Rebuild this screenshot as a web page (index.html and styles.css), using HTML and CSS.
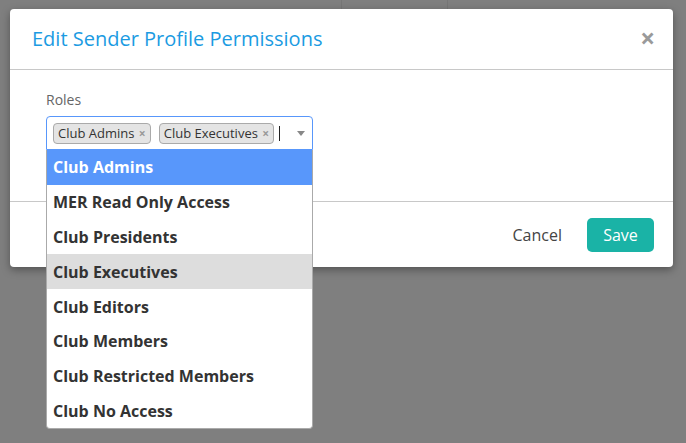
FILE: index.html
```html
<!DOCTYPE html>
<html>
<head>
  <meta charset="UTF-8">
  <title>Edit Sender Profile Permissions</title>
  <link rel="stylesheet" href="styles.css">
</head>
<body>
  <div class="backdrop">
    <div class="modal">
      <div class="modal-header">
        <h4 class="modal-title">Edit Sender Profile Permissions</h4>
        <span class="close">&times;</span>
      </div>
      <div class="modal-body">
        <label class="field-label">Roles</label>
        <div class="select">
          <div class="select-box">
            <span class="tag">Club Admins <span class="tag-x">&times;</span></span>
            <span class="tag">Club Executives <span class="tag-x">&times;</span></span>
            <span class="caret-line"></span>
            <span class="arrow"></span>
          </div>
          <ul class="options">
            <li class="option highlighted">Club Admins</li>
            <li class="option">MER Read Only Access</li>
            <li class="option">Club Presidents</li>
            <li class="option selected">Club Executives</li>
            <li class="option">Club Editors</li>
            <li class="option">Club Members</li>
            <li class="option">Club Restricted Members</li>
            <li class="option">Club No Access</li>
          </ul>
        </div>
      </div>
      <div class="modal-footer">
        <button class="btn-cancel">Cancel</button>
        <button class="btn-save">Save</button>
      </div>
    </div>
  </div>
</body>
</html>
```

FILE: styles.css
```css
* {
  box-sizing: border-box;
}
html, body {
  margin: 0;
  height: 100%;
}
body {
  font-family: "Open Sans", "DejaVu Sans", sans-serif;
  background: #7f7f7f;
  color: #333;
}

.backdrop {
  height: 100%;
  padding: 9px 0 0 10px;
  background:
    linear-gradient(#767676, #767676) 341px 0 / 1px 9px no-repeat,
    linear-gradient(#767676, #767676) 447px 0 / 1px 9px no-repeat,
    #7f7f7f;
}

.modal {
  width: 663px;
  background: #fff;
  border-radius: 4px;
  box-shadow: 0 3px 8px rgba(0, 0, 0, .35);
}

.modal-header {
  height: 61px;
  display: flex;
  align-items: center;
  justify-content: space-between;
  padding: 0 18px 2px 22px;
  border-bottom: 1px solid #c8c8c8;
}
.modal-title {
  margin: 0;
  font-size: 20px;
  font-weight: normal;
  color: #1b9be2;
}
.close {
  font-size: 26px;
  font-weight: bold;
  color: #9a9a9a;
  line-height: 1;
}

.modal-body {
  height: 131px;
  padding: 20px 36px;
}
.field-label {
  display: block;
  font-size: 14px;
  color: #666;
  margin-bottom: 7px;
}

.select {
  position: relative;
  width: 267px;
}
.select-box {
  height: 34px;
  display: flex;
  align-items: center;
  gap: 8px;
  padding: 0 6px;
  border: 1px solid #5897fb;
  border-radius: 4px 4px 0 0;
  position: relative;
}
.tag {
  font-size: 13px;
  line-height: 19px;
  padding: 0 4px;
  background: #e4e4e4;
  border: 1px solid #aaa;
  border-radius: 4px;
  color: #333;
  white-space: nowrap;
}
.tag-x {
  color: #999;
  font-size: 12px;
  font-weight: bold;
  margin-left: 1px;
}
.caret-line {
  width: 1px;
  height: 15px;
  background: #222;
  margin-left: -3px;
}
.arrow {
  position: absolute;
  right: 7px;
  top: 14px;
  border-left: 4px solid transparent;
  border-right: 4px solid transparent;
  border-top: 5px solid #888;
}

.options {
  position: absolute;
  top: 34px;
  left: 0;
  width: 267px;
  margin: 0;
  padding: 0;
  list-style: none;
  background: #fff;
  border: 1px solid #aaa;
  border-top: none;
  border-radius: 0 0 4px 4px;
  z-index: 2;
}
.option {
  height: 34.8px;
  display: flex;
  align-items: center;
  padding: 0 6px;
  font-size: 16px;
  font-weight: bold;
  color: #333;
}
.option.highlighted {
  background: #5897fb;
  color: #fff;
}
.option.selected {
  background: #ddd;
}

.modal-footer {
  height: 66px;
  display: flex;
  align-items: center;
  justify-content: flex-end;
  gap: 16px;
  padding: 0 19px 0 0;
  border-top: 1px solid #c8c8c8;
}
.btn-cancel {
  font-family: inherit;
  font-size: 16px;
  color: #444;
  background: none;
  border: none;
  padding: 6px 9px;
}
.btn-save {
  font-family: inherit;
  font-size: 16px;
  color: #fff;
  background: #1ab3a6;
  border: none;
  border-radius: 5px;
  width: 67px;
  height: 34px;
}
```
